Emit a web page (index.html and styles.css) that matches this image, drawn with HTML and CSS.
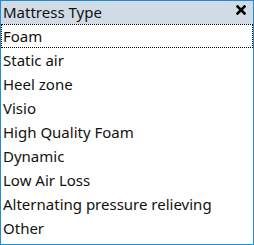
FILE: index.html
```html
<!DOCTYPE html>
<html>
<head>
<meta charset="utf-8">
<link rel="stylesheet" href="styles.css">
</head>
<body>
<div class="panel">
  <div class="header">
    <span class="title">Mattress Type</span>
    <svg class="close" width="10" height="10" viewBox="0 0 10 10"><path d="M1.5 1.5 L8.5 8.5 M8.5 1.5 L1.5 8.5" stroke="#000" stroke-width="2.6" stroke-linecap="square"/></svg>
  </div>
  <ul class="list">
    <li class="item focused">Foam</li>
    <li class="item">Static air</li>
    <li class="item">Heel zone</li>
    <li class="item">Visio</li>
    <li class="item">High Quality Foam</li>
    <li class="item">Dynamic</li>
    <li class="item">Low Air Loss</li>
    <li class="item">Alternating pressure relieving</li>
    <li class="item">Other</li>
  </ul>
</div>
</body>
</html>
```
FILE: styles.css
```css
html, body {
  margin: 0;
  padding: 0;
  background: #ffffff;
}
.panel {
  box-sizing: border-box;
  width: 254px;
  height: 245px;
  border: 1px solid #1a8fd6;
  background: #ffffff;
  font-family: "Noto Sans", "Open Sans", sans-serif;
  font-size: 15px;
  color: #111111;
  display: flex;
  flex-direction: column;
}
.header {
  height: 23px;
  background: #d1dbe6;
  display: flex;
  align-items: center;
  justify-content: space-between;
  padding: 0 7px 0 2px;
}
.title {
  line-height: 23px;
}
.close {
  display: block;
  margin-top: -6px;
}
.list {
  list-style: none;
  margin: 0;
  padding: 0;
}
.item {
  box-sizing: border-box;
  height: 24px;
  line-height: 24px;
  padding: 0 2px;
  white-space: nowrap;
}
.focused {
  outline: 1px dotted #000;
  outline-offset: -1px;
}
```
